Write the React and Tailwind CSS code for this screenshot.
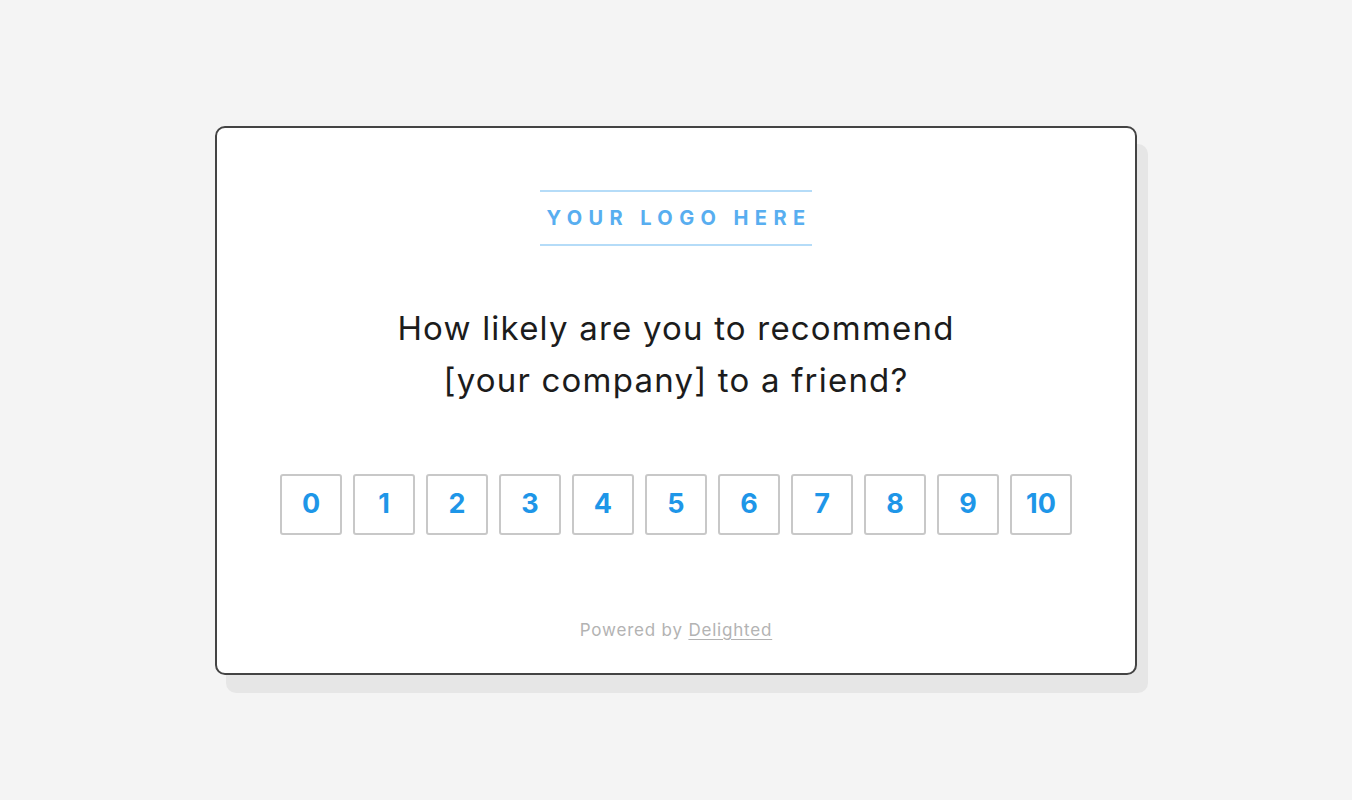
const SCORES = [0, 1, 2, 3, 4, 5, 6, 7, 8, 9, 10];

export default function App() {
  return (
    <div className="h-screen w-full bg-[#f4f4f4] flex items-center justify-center font-['Inter','Noto_Sans',sans-serif]">
      <div className="w-[922px] h-[549px] bg-white border-2 border-[#444444] rounded-[10px] shadow-[11px_18px_0_#e6e6e6] flex flex-col items-center pt-[62px]">
        {/* logo placeholder */}
        <div className="border-y-2 border-[#b5dcf8] h-[56px] w-[272px] flex items-center justify-center">
          <span className="text-[20px] font-bold tracking-[6.4px] text-[#58aef0] leading-none pl-[6px]">YOUR LOGO HERE</span>
        </div>

        <h1 className="mt-[56px] text-[33px] leading-[52px] tracking-[1.2px] text-[#1c1c1c] text-center font-normal">
          How likely are you to recommend
          <br />
          [your company] to a friend?
        </h1>

        <div className="mt-[68px] flex gap-[11px]">
          {SCORES.map(n => (
            <button
              key={n}
              className="w-[62px] h-[61px] border-2 border-[#c8c8c8] rounded-[3px] flex items-center justify-center text-[27px] font-bold text-[#1e96e8] bg-white"
            >
              {n}
            </button>
          ))}
        </div>

        <p className="mt-[83px] text-[17px] leading-[24px] tracking-[0.8px] text-[#b3b3b3]">
          Powered by <span className="underline underline-offset-[3px]">Delighted</span>
        </p>
      </div>
    </div>
  );
}
